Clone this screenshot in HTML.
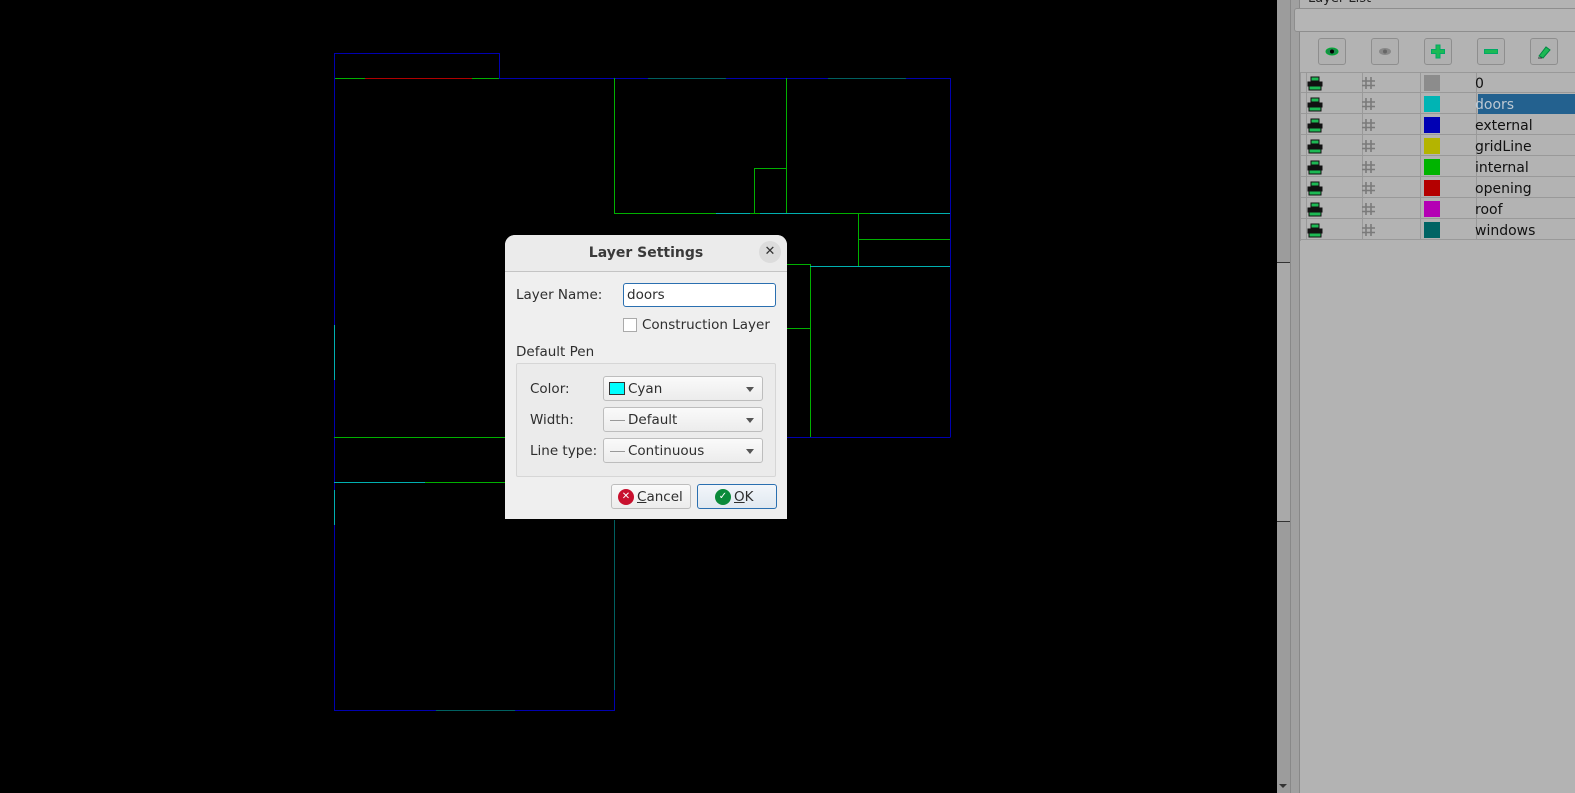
<!DOCTYPE html>
<html><head><meta charset="utf-8"><style>
*{box-sizing:border-box;margin:0;padding:0}
body{width:1575px;height:793px;background:#000;position:relative;overflow:hidden;font-family:"DejaVu Sans","Liberation Sans",sans-serif;font-size:13.5px;line-height:17px;color:#2e2e2e}
.abs{position:absolute}
.btn{position:absolute;top:38px;width:28px;height:27px;border:1px solid #8e8e8e;border-radius:3px;background:#b0b0b0}
.row{position:absolute;left:1300px;width:275px;height:21px;border-bottom:1px solid #999}
.cell{position:absolute;top:0;height:21px;border-right:1px solid #999}
.dlg{left:505px;top:235px;width:282px;height:284px;background:#efefef;border-radius:10px 10px 0 0}
.combo{position:absolute;left:98px;width:160px;height:25px;border:1px solid #bdbdbd;border-radius:3px;background:linear-gradient(#fafafa,#ececec)}
.combo span{position:absolute;left:24px;top:4px}
.combo i{position:absolute;right:8px;top:10px;border-left:4px solid transparent;border-right:4px solid transparent;border-top:5px solid #555}
.combo b{position:absolute;left:6px;top:12px;width:15px;height:1px;background:#999}
</style></head><body>
<svg class="abs" style="left:0;top:0" width="1275" height="793" shape-rendering="crispEdges">
<g fill="none" stroke-width="1">
<path d="M334.5 53.5H499.5V78.5" stroke="#0000b0"/>
<path d="M334.5 78.5H950.5V437.5" stroke="#0000b0"/>
<path d="M365 78.5H472" stroke="#b00000"/>
<path d="M334 78.5H365M472 78.5H499" stroke="#00b000"/>
<path d="M648 78.5H726M828 78.5H906" stroke="#006060"/>
<path d="M334.5 53V710.5H614.5V520" stroke="#0000b0"/>
<path d="M614.5 78V213.5H950M786.5 78V213.5M754.5 213V168.5H786.5" stroke="#00b000"/>
<path d="M716 213.5H750M760 213.5H830M870 213.5H950" stroke="#00b0b0"/>
<path d="M858.5 213V266.5M858 239.5H950M787 264.5H810.5V437.5M787 328.5H810.5" stroke="#00b000"/>
<path d="M810 266.5H950" stroke="#00b0b0"/>
<path d="M787 437.5H950" stroke="#0000b0"/>
<path d="M334 437.5H505" stroke="#00b000"/>
<path d="M334 482.5H425" stroke="#00b0b0"/>
<path d="M425 482.5H505" stroke="#00b000"/>
<path d="M334.5 325V380M334.5 490V525" stroke="#00b0b0"/>
<path d="M614.5 520V690" stroke="#006060"/>
<path d="M436 710.5H515" stroke="#006060"/>
</g></svg>

<div class="abs" style="left:1277px;top:0;width:13px;height:793px;background:#9c9c9c"></div>
<div class="abs" style="left:1277px;top:262px;width:13px;height:260px;background:#a9a9a9;border-top:1px solid #333;border-bottom:1px solid #333"></div>
<div class="abs" style="left:1279px;top:784px;border-left:4px solid transparent;border-right:4px solid transparent;border-top:4px solid #333"></div>
<div class="abs" style="left:1290px;top:0;width:10px;height:793px;background:#a0a0a0;border-left:1px solid #888;border-right:1px solid #888"></div>
<div class="abs" style="left:1300px;top:0;width:275px;height:793px;background:#b3b3b3"></div>
<div class="abs" style="left:1308px;top:-10px;font-size:13px;color:#222">Layer List</div>
<div class="abs" style="left:1294px;top:8px;width:290px;height:24px;border:1px solid #8e8e8e;border-radius:3px;background:#b5b5b5"></div>

<div class="btn" style="left:1318px"><svg width="26" height="25"><ellipse cx="13" cy="12.5" rx="6" ry="3.5" fill="#1a8a4a" stroke="#0a3" /><circle cx="13" cy="12.5" r="2" fill="#000"/></svg></div>
<div class="btn" style="left:1371px"><svg width="26" height="25"><ellipse cx="13" cy="12.5" rx="6" ry="3.5" fill="#888"/><circle cx="13" cy="12.5" r="2" fill="#666"/></svg></div>
<div class="btn" style="left:1424px"><svg width="26" height="25"><path d="M11 6h4v4.5h4.5v4H15V19h-4v-4.5H6.5v-4H11z" fill="#1db954" stroke="#0a6" /></svg></div>
<div class="btn" style="left:1477px"><svg width="26" height="25"><rect x="6.5" y="10.5" width="13" height="4" fill="#1db954" stroke="#0a6"/></svg></div>
<div class="btn" style="left:1530px"><svg width="26" height="25"><path d="M8 17l7-9 4 3-7 8z" fill="#1db954" stroke="#084"/><path d="M7 19l4 0" stroke="#333"/></svg></div>

<div class="abs" style="left:1300px;top:72px;width:275px;height:169px;border-top:1px solid #999;border-left:1px solid #999"></div>
<div class="row" style="top:72px"><div class="cell" style="left:0;width:7px"></div><div class="cell" style="left:7px;width:56px"></div><div class="cell" style="left:63px;width:58px"></div><div class="cell" style="left:121px;width:56px"></div></div>
<div class="row" style="top:93px"><div class="cell" style="left:0;width:7px"></div><div class="cell" style="left:7px;width:56px"></div><div class="cell" style="left:63px;width:58px"></div><div class="cell" style="left:121px;width:56px"></div></div>
<div class="row" style="top:114px"><div class="cell" style="left:0;width:7px"></div><div class="cell" style="left:7px;width:56px"></div><div class="cell" style="left:63px;width:58px"></div><div class="cell" style="left:121px;width:56px"></div></div>
<div class="row" style="top:135px"><div class="cell" style="left:0;width:7px"></div><div class="cell" style="left:7px;width:56px"></div><div class="cell" style="left:63px;width:58px"></div><div class="cell" style="left:121px;width:56px"></div></div>
<div class="row" style="top:156px"><div class="cell" style="left:0;width:7px"></div><div class="cell" style="left:7px;width:56px"></div><div class="cell" style="left:63px;width:58px"></div><div class="cell" style="left:121px;width:56px"></div></div>
<div class="row" style="top:177px"><div class="cell" style="left:0;width:7px"></div><div class="cell" style="left:7px;width:56px"></div><div class="cell" style="left:63px;width:58px"></div><div class="cell" style="left:121px;width:56px"></div></div>
<div class="row" style="top:198px"><div class="cell" style="left:0;width:7px"></div><div class="cell" style="left:7px;width:56px"></div><div class="cell" style="left:63px;width:58px"></div><div class="cell" style="left:121px;width:56px"></div></div>
<div class="row" style="top:219px"><div class="cell" style="left:0;width:7px"></div><div class="cell" style="left:7px;width:56px"></div><div class="cell" style="left:63px;width:58px"></div><div class="cell" style="left:121px;width:56px"></div></div>

<div class="abs" style="left:1478px;top:94px;width:97px;height:20px;background:#23618f"></div>

<svg class="abs" style="left:1300px;top:72px" width="275" height="168">
<defs>
<g id="pr"><rect x="11" y="5" width="8" height="4" fill="#1db954" stroke="#111" stroke-width="1"/><rect x="7.5" y="9.5" width="15" height="5" fill="#111"/><rect x="9" y="14" width="12" height="4" fill="#1db954" stroke="#111" stroke-width="1"/></g>
<g id="hs" stroke="#7a7a7a" stroke-width="1.6"><path d="M66 5v12M71 5v12M62 9h13M62 13.5h13"/></g>
</defs>
<g><use href="#pr"/><use href="#hs"/></g>
<g transform="translate(0,21)"><use href="#pr"/><use href="#hs"/></g>
<g transform="translate(0,42)"><use href="#pr"/><use href="#hs"/></g>
<g transform="translate(0,63)"><use href="#pr"/><use href="#hs"/></g>
<g transform="translate(0,84)"><use href="#pr"/><use href="#hs"/></g>
<g transform="translate(0,105)"><use href="#pr"/><use href="#hs"/></g>
<g transform="translate(0,126)"><use href="#pr"/><use href="#hs"/></g>
<g transform="translate(0,147)"><use href="#pr"/><use href="#hs"/></g>
<rect x="124" y="3" width="16" height="16" fill="#8c8c8c"/>
<rect x="124" y="24" width="16" height="16" fill="#00b4b4"/>
<rect x="124" y="45" width="16" height="16" fill="#0000b4"/>
<rect x="124" y="66" width="16" height="16" fill="#b4b400"/>
<rect x="124" y="87" width="16" height="16" fill="#00b400"/>
<rect x="124" y="108" width="16" height="16" fill="#b40000"/>
<rect x="124" y="129" width="16" height="16" fill="#b400b4"/>
<rect x="124" y="150" width="16" height="16" fill="#006464"/>
</svg>
<div class="abs" style="left:1475px;top:74px;font-size:14px;line-height:21px;color:#111">
<div>0</div><div style="color:#bcc8d2">doors</div><div>external</div><div>gridLine</div><div>internal</div><div>opening</div><div>roof</div><div>windows</div>
</div>

<div class="abs dlg">
<div class="abs" style="left:0;top:0;width:282px;height:37px;background:#ebebeb;border-bottom:1px solid #c4c4c4;border-radius:10px 10px 0 0"></div>
<div class="abs" style="left:0;top:10px;width:282px;text-align:center;font-weight:bold;font-size:14px;color:#3a3a3a">Layer Settings</div>
<div class="abs" style="left:254px;top:6px;width:22px;height:22px;border-radius:50%;background:#dcdcdc;text-align:center;line-height:22px;font-size:13px;color:#333">✕</div>
<div class="abs" style="left:11px;top:52px">Layer Name:</div>
<div class="abs" style="left:118px;top:48px;width:153px;height:24px;border:1px solid #2a6fb0;border-radius:3px;background:#fff;padding:3px 3px">doors</div>
<div class="abs" style="left:118px;top:83px;width:14px;height:14px;border:1px solid #aaa;background:#fff"></div>
<div class="abs" style="left:137px;top:82px">Construction Layer</div>
<div class="abs" style="left:11px;top:109px">Default Pen</div>
<div class="abs" style="left:11px;top:128px;width:260px;height:114px;border:1px solid #d6d6d6;border-radius:2px;background:#ebebeb">
<div class="abs" style="left:13px;top:17px">Color:</div>
<div class="abs" style="left:13px;top:48px">Width:</div>
<div class="abs" style="left:13px;top:79px">Line type:</div>
<div class="combo" style="top:12px;left:86px"><div style="position:absolute;left:5px;top:5px;width:16px;height:13px;background:#0ff;border:1px solid #333"></div><span>Cyan</span><i></i></div>
<div class="combo" style="top:43px;left:86px"><b></b><span>Default</span><i></i></div>
<div class="combo" style="top:74px;left:86px"><b></b><span>Continuous</span><i></i></div>
</div>
<div class="abs" style="left:106px;top:249px;width:80px;height:25px;border:1px solid #bdbdbd;border-radius:3px;background:linear-gradient(#fafafa,#ececec)">
<div class="abs" style="left:6px;top:4px;width:16px;height:16px;border-radius:50%;background:#c8102e;color:#fff;font-size:10px;text-align:center;line-height:16px;font-weight:bold">✕</div>
<div class="abs" style="left:25px;top:4px"><u>C</u>ancel</div></div>
<div class="abs" style="left:192px;top:249px;width:80px;height:25px;border:1px solid #2a6fb0;border-radius:3px;background:linear-gradient(#f2f6fa,#e0e8f0)">
<div class="abs" style="left:17px;top:4px;width:16px;height:16px;border-radius:50%;background:#0a8a3a;color:#fff;font-size:10px;text-align:center;line-height:16px;font-weight:bold">✓</div>
<div class="abs" style="left:36px;top:4px"><u>O</u>K</div></div>
</div>
</body></html>
